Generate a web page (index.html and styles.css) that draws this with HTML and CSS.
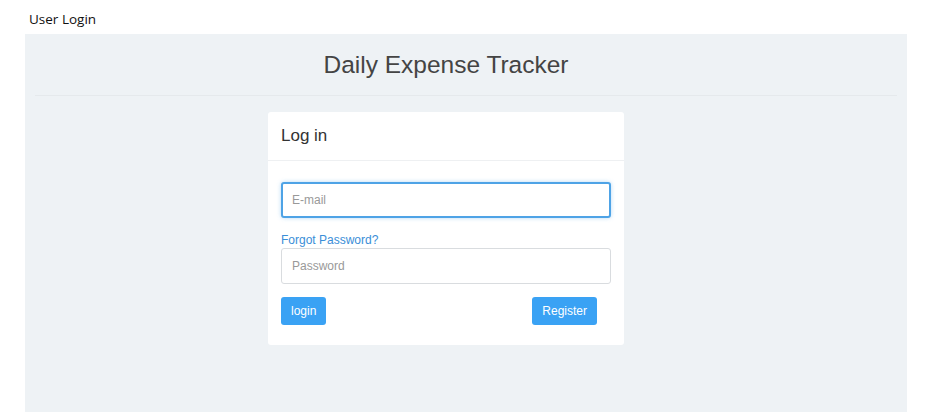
FILE: index.html
```html
<!DOCTYPE html>
<html lang="en">

<head>
    <meta charset="UTF-8">
    <meta name="viewport" content="width=device-width, initial-scale=1.0">
    <title>User Login</title>
    <link rel="stylesheet" href="styles.css">
</head>

<body>
    <div class="page_title">User Login</div>
    <div class="main">
        <div class="header">
            <h1>Daily Expense Tracker</h1>
        </div>
        <div class="login_card">
            <div class="card_head">Log in</div>
            <div class="card_body">
                <input type="email" class="field focused" placeholder="E-mail" />
                <a href="#" class="forgot">Forgot Password?</a>
                <input type="password" class="field" placeholder="Password" />
                <div class="actions">
                    <button class="btn">login</button>
                    <button class="btn">Register</button>
                </div>
            </div>
        </div>
    </div>
</body>

</html>
```

FILE: styles.css
```css
body {
    margin: 0;
    background-color: #fff;
    font-family: "Liberation Sans", Arial, sans-serif;
}

.page_title {
    height: 34px;
    padding-left: 29px;
    box-sizing: border-box;
    padding-top: 10px;
    font-family: "Open Sans", sans-serif;
    font-size: 13.5px;
    color: #111;
}

.main {
    margin: 0 24px 0 25px;
    height: 378px;
    background-color: #eef2f5;
    overflow: hidden;
}

.header {
    margin: 0 10px;
    padding: 17px 40px 16px 0;
    border-bottom: 1px solid #e5e9ec;
}

.header h1 {
    margin: 0;
    text-align: center;
    font-weight: normal;
    font-size: 24.5px;
    line-height: 28px;
    color: #444;
}

.login_card {
    width: 356px;
    margin: 16px 0 0 243px;
    background-color: #fff;
    border-radius: 3px;
}

.card_head {
    height: 49px;
    box-sizing: border-box;
    padding: 14px 13px 0;
    font-size: 17px;
    color: #333;
    border-bottom: 1px solid #eef0f2;
}

.card_body {
    padding: 21px 13px 20px;
    display: flex;
    flex-direction: column;
}

.field {
    height: 36px;
    box-sizing: border-box;
    border: 1px solid #d9dcdf;
    border-radius: 3px;
    padding: 0 10px;
    font-size: 12px;
    font-family: "Liberation Sans", Arial, sans-serif;
    color: #555;
    outline: none;
}

.field::placeholder {
    color: #999;
}

.focused {
    border: 2px solid #4ea3e6;
    padding-left: 9px;
    box-shadow: 0 0 4px rgba(78, 163, 230, 0.4);
}

.forgot {
    margin-top: 15px;
    height: 15px;
    font-size: 12px;
    color: #3a8ed8;
    text-decoration: none;
}

.actions {
    display: flex;
    justify-content: space-between;
    padding-right: 14px;
    margin-top: 13px;
}

.btn {
    height: 28px;
    padding: 0 10px;
    border: none;
    border-radius: 3px;
    background-color: #3aa2f4;
    color: #fff;
    font-family: "Liberation Sans", Arial, sans-serif;
    font-size: 12px;
}
```
